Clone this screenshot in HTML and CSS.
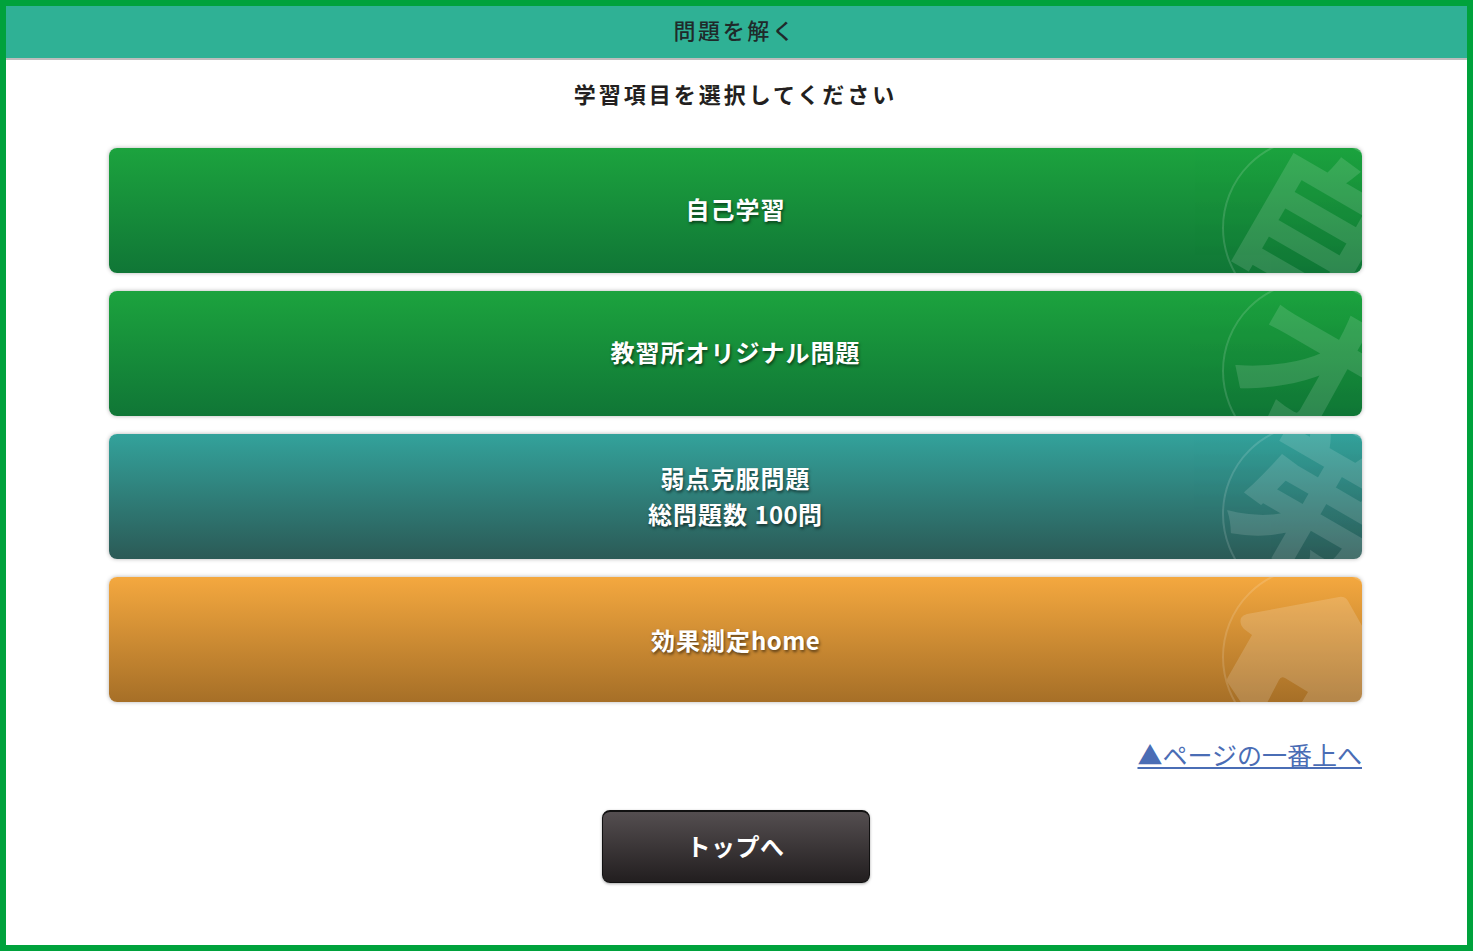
FILE: index.html
```html
<!DOCTYPE html>
<html lang="ja">
<head>
<meta charset="utf-8">
<title>問題を解く</title>
<link rel="stylesheet" href="styles.css">
</head>
<body>
<div class="page">
  <header class="head"><h1 class="head-title">問題を解く</h1></header>
  <main class="main">
    <h2 class="lead">学習項目を選択してください</h2>
    <nav class="menu">
      <a class="item green" href="#">
        <svg class="mark" viewBox="1000 0 253 125" aria-hidden="true"><circle class="ring" cx="1204" cy="80" r="90"/><text class="glyph glyph-self" transform="rotate(30 1210 71)" x="1210" y="71">自</text></svg>
        <span class="label">自己学習</span>
      </a>
      <a class="item green" href="#">
        <svg class="mark" viewBox="1000 0 253 125" aria-hidden="true"><circle class="ring" cx="1204" cy="80" r="90"/><text class="glyph glyph-orig" transform="rotate(30 1208 72)" x="1208" y="72">オ</text></svg>
        <span class="label">教習所オリジナル問題</span>
      </a>
      <a class="item teal" href="#">
        <svg class="mark" viewBox="1000 0 253 125" aria-hidden="true"><circle class="ring" cx="1204" cy="80" r="90"/><text class="glyph glyph-weak" transform="rotate(30 1212 58)" x="1212" y="58">弟</text></svg>
        <span class="label">弱点克服問題<br>総問題数 <span class="latin">100</span>問</span>
      </a>
      <a class="item orange" href="#">
        <svg class="mark" viewBox="1000 0 253 125" aria-hidden="true"><circle class="ring" cx="1204" cy="80" r="90"/><path class="home" d="M1138 37 L1230 20 Q1236 19 1239 24 L1256 54 L1256 130 L1190 130 L1199 115 L1176 101 Q1172 99 1170 103 L1156 130 L1135 130 L1119 106 Q1117 103 1119 100 L1143 58 L1135 52 Q1130 47 1132 41 Q1134 38 1138 37 Z"/></svg>
        <span class="label">効果測定<span class="latin">home</span></span>
      </a>
    </nav>
    <p class="totop"><a class="totop-link" href="#">▲ページの一番上へ</a></p>
    <div class="back-wrap"><a class="back" href="#">トップへ</a></div>
  </main>
</div>
</body>
</html>
```
FILE: styles.css
```css
* { box-sizing: border-box; }
html, body { margin: 0; padding: 0; }
body {
  font-family: "Noto Sans CJK JP", "Liberation Sans", sans-serif;
  background: #fff;
}
.page {
  width: 1473px;
  height: 951px;
  border: 6px solid #00a23c;
  overflow: hidden;
}
.head {
  height: 54px;
  padding-bottom: 6px;
  background: #2fb195;
  border-bottom: 2px solid #bdbdbd;
  display: flex;
  align-items: center;
  justify-content: center;
}
.head-title {
  margin: 0 3px 0 0;
  font-size: 22px;
  line-height: 1;
  font-weight: 500;
  letter-spacing: 2.6px;
  color: #1f2a2a;
}
.main {
  width: 1253px;
  margin-left: 103px;
}
.lead {
  margin: 0;
  height: 88px;
  padding-top: 18px;
  text-align: center;
  font-size: 22px;
  line-height: 30px;
  font-weight: 700;
  letter-spacing: 3px;
  color: #231f20;
}
.menu {
  display: flex;
  flex-direction: column;
  gap: 18px;
}
.item {
  position: relative;
  height: 125px;
  border-radius: 8px;
  overflow: hidden;
  display: flex;
  align-items: center;
  justify-content: center;
  text-decoration: none;
  box-shadow: 0 0 4px rgba(0, 0, 0, .3);
}
.green { background: linear-gradient(#1ca33e, #107636); }
.teal { background: linear-gradient(#33a29b, #2b5a56); }
.orange { background: linear-gradient(#f4a83f, #a66f27); }
.mark {
  position: absolute;
  top: 0;
  right: 0;
  width: 253px;
  height: 125px;
}
.ring {
  fill: none;
  stroke: rgba(255, 255, 255, .14);
  stroke-width: 2;
}
.glyph {
  font-family: "Noto Sans CJK JP", sans-serif;
  font-weight: 700;
  text-anchor: middle;
  dominant-baseline: central;
  fill: #fff;
  stroke: #fff;
  stroke-width: 2px;
  opacity: .13;
}
.glyph-self { font-size: 152px; }
.glyph-orig { font-size: 155px; }
.glyph-weak { font-size: 155px; }
.home { fill: rgba(255, 255, 255, .16); }
.label {
  position: relative;
  top: -2px;
  text-align: center;
  font-size: 24px;
  line-height: 36px;
  font-weight: 700;
  letter-spacing: 1px;
  color: #fff;
  text-shadow: 1px 2px 3px rgba(0, 0, 0, .55);
}
.teal .label { top: -1px; }
.orange .label { top: 0; }
.latin { letter-spacing: .4px; }
.totop {
  margin: 34px 0 0;
  height: 36px;
  text-align: right;
  font-size: 25px;
  line-height: 36px;
}
.totop-link { color: #4a6db5; }
.back-wrap {
  display: flex;
  justify-content: center;
  margin-top: 38px;
}
.back {
  width: 268px;
  height: 73px;
  padding-bottom: 3px;
  display: flex;
  align-items: center;
  justify-content: center;
  border: 1px solid #111;
  border-top-width: 2px;
  border-radius: 8px;
  background: linear-gradient(#544e50, #221e1f);
  box-shadow: 0 1px 3px rgba(0, 0, 0, .35);
  color: #fff;
  font-size: 24px;
  font-weight: 700;
  text-decoration: none;
  letter-spacing: .5px;
}
```
